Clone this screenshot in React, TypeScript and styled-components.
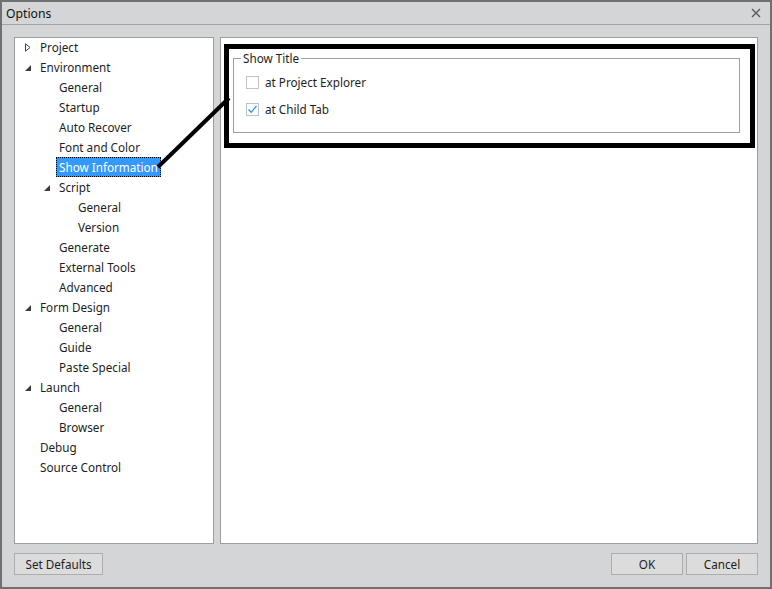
import React from "react";
import styled, { createGlobalStyle } from "styled-components";

const GlobalStyle = createGlobalStyle`
  html, body { margin: 0; padding: 0; background: #d4d5d7; overflow: hidden; }
  * { box-sizing: border-box; }
`;

const font = `"Noto Sans", "Open Sans", "Liberation Sans", sans-serif`;

const Stage = styled.div`
  position: relative;
  width: 772px;
  height: 589px;
  font-family: ${font};
  font-size: 11.7px;
  color: #1e1e1e;
`;

const Window = styled.div`
  width: 100%;
  height: 100%;
  display: flex;
  flex-direction: column;
  border: 2px solid #707070;
  background: #d4d5d7;
`;

const TitleBar = styled.div`
  height: 23px;
  flex: none;
  display: flex;
  align-items: center;
  justify-content: space-between;
  padding: 0 9px 0 4px;
  border-bottom: 1px solid #a3a3a3;
  font-size: 12.2px;
  color: #111;
`;

const CloseButton = styled.span`
  display: flex;
  width: 10px;
  height: 10px;
`;

const Body = styled.div`
  flex: 1;
  display: flex;
  flex-direction: column;
  gap: 9px;
  padding: 12px;
  min-height: 0;
`;

const Panels = styled.div`
  flex: 1;
  display: flex;
  gap: 6px;
  min-height: 0;
`;

const TreePanel = styled.div`
  width: 200px;
  flex: none;
  background: #fff;
  border: 1px solid #9d9d9d;
  overflow: hidden;
`;

const TreeList = styled.div`
  display: flex;
  flex-direction: column;
  margin-top: -1px;
`;

const Row = styled.div<{ $level: number }>`
  height: 20px;
  flex: none;
  display: flex;
  align-items: center;
  padding-left: ${(p) => 10 + p.$level * 19}px;
`;

const ArrowSlot = styled.span`
  width: 15px;
  flex: none;
  display: flex;
  align-items: center;
`;

const Label = styled.span<{ $selected?: boolean }>`
  height: 20px;
  line-height: 18px;
  padding: 0 2px;
  margin-left: -3px;
  white-space: nowrap;
  border: 1px dotted ${(p) => (p.$selected ? "#000" : "transparent")};
  background: ${(p) => (p.$selected ? "#3399ff" : "transparent")};
  color: ${(p) => (p.$selected ? "#fff" : "#1e1e1e")};
`;

const ContentPanel = styled.div`
  flex: 1;
  background: #fff;
  border: 1px solid #9d9d9d;
  padding: 6px 2px 0 3px;
`;

const Highlight = styled.div`
  border: 5px solid #000;
  padding: 1px 10px 10px 4px;
`;

const GroupBox = styled.fieldset`
  margin: 0;
  padding: 0;
  border: 1px solid #a0a0a0;
  min-width: 0;
`;

const GroupTitle = styled.legend`
  margin-left: 7px;
  padding: 0 2px;
  line-height: 16px;
  height: 16px;
  color: #1e1e1e;
`;

const CheckList = styled.div`
  display: flex;
  flex-direction: column;
  gap: 7px;
  padding: 6px 10px 13px 12px;
`;

const CheckRow = styled.label`
  height: 20px;
  display: flex;
  align-items: center;
  gap: 6px;
`;

const Box = styled.span<{ $checked?: boolean }>`
  width: 13px;
  height: 13px;
  flex: none;
  display: flex;
  align-items: center;
  justify-content: center;
  border: 1px solid ${(p) => (p.$checked ? "#b9c3cf" : "#c3c3c3")};
  background: #fff;
`;

const Footer = styled.div`
  height: 22px;
  flex: none;
  display: flex;
  justify-content: space-between;
`;

const ButtonGroup = styled.div`
  display: flex;
  gap: 3px;
`;

const Button = styled.button<{ $width: number }>`
  width: ${(p) => p.$width}px;
  height: 22px;
  padding: 0;
  font-family: ${font};
  font-size: 11.7px;
  color: #1e1e1e;
  background: #dcdcdc;
  border: 1px solid #adadad;
`;

const Annotation = styled.svg`
  position: absolute;
  left: 0;
  top: 0;
  pointer-events: none;
`;

type Node = { label: string; level: number; arrow?: "open" | "closed"; selected?: boolean };

const tree: Node[] = [
  { label: "Project", level: 0, arrow: "closed" },
  { label: "Environment", level: 0, arrow: "open" },
  { label: "General", level: 1 },
  { label: "Startup", level: 1 },
  { label: "Auto Recover", level: 1 },
  { label: "Font and Color", level: 1 },
  { label: "Show Information", level: 1, selected: true },
  { label: "Script", level: 1, arrow: "open" },
  { label: "General", level: 2 },
  { label: "Version", level: 2 },
  { label: "Generate", level: 1 },
  { label: "External Tools", level: 1 },
  { label: "Advanced", level: 1 },
  { label: "Form Design", level: 0, arrow: "open" },
  { label: "General", level: 1 },
  { label: "Guide", level: 1 },
  { label: "Paste Special", level: 1 },
  { label: "Launch", level: 0, arrow: "open" },
  { label: "General", level: 1 },
  { label: "Browser", level: 1 },
  { label: "Debug", level: 0 },
  { label: "Source Control", level: 0 },
];

const Arrow = ({ kind }: { kind?: "open" | "closed" }) => {
  if (kind === "closed")
    return (
      <svg width="6" height="9" viewBox="0 0 6 9">
        <path d="M0.5 0.8 L5 4.5 L0.5 8.2 Z" fill="none" stroke="#444" strokeWidth="1" />
      </svg>
    );
  if (kind === "open")
    return (
      <svg width="6" height="6" viewBox="0 0 6 6" style={{ marginTop: 2 }}>
        <path d="M6 0 L6 6 L0 6 Z" fill="#3c3c3c" />
      </svg>
    );
  return null;
};

const Check = () => (
  <svg width="11" height="11" viewBox="0 0 11 11">
    <path d="M1.5 5.5 L4.2 8.3 L9.5 2" fill="none" stroke="#3b8de6" strokeWidth="1.3" />
  </svg>
);

export default function App() {
  return (
    <Stage>
      <GlobalStyle />
      <Window>
        <TitleBar>
          <span>Options</span>
          <CloseButton>
            <svg width="10" height="10" viewBox="0 0 10 10">
              <path d="M1 1 L9 9 M9 1 L1 9" stroke="#5a5a5a" strokeWidth="1.4" />
            </svg>
          </CloseButton>
        </TitleBar>
        <Body>
          <Panels>
            <TreePanel>
              <TreeList>
                {tree.map((n, i) => (
                  <Row key={i} $level={n.level}>
                    <ArrowSlot>
                      <Arrow kind={n.arrow} />
                    </ArrowSlot>
                    <Label $selected={n.selected}>{n.label}</Label>
                  </Row>
                ))}
              </TreeList>
            </TreePanel>
            <ContentPanel>
              <Highlight>
                <GroupBox>
                  <GroupTitle>Show Title</GroupTitle>
                  <CheckList>
                    <CheckRow>
                      <Box />
                      <span>at Project Explorer</span>
                    </CheckRow>
                    <CheckRow>
                      <Box $checked>
                        <Check />
                      </Box>
                      <span>at Child Tab</span>
                    </CheckRow>
                  </CheckList>
                </GroupBox>
              </Highlight>
            </ContentPanel>
          </Panels>
          <Footer>
            <Button $width={89}>Set Defaults</Button>
            <ButtonGroup>
              <Button $width={72}>OK</Button>
              <Button $width={72}>Cancel</Button>
            </ButtonGroup>
          </Footer>
        </Body>
      </Window>
      <Annotation width="772" height="589" viewBox="0 0 772 589">
        <line x1="158" y1="167" x2="229" y2="98" stroke="#000" strokeWidth="4" />
      </Annotation>
    </Stage>
  );
}
